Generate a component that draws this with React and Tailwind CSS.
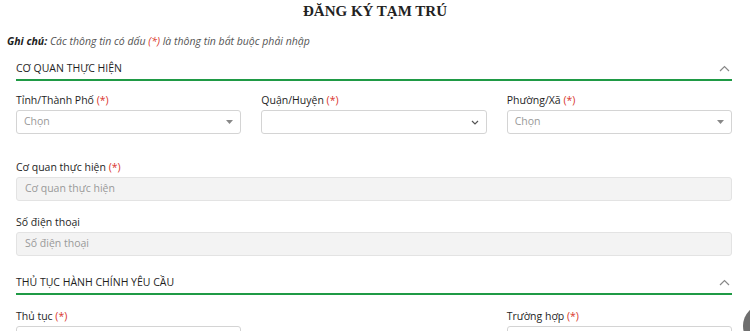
import React from "react";

const Req = () => <span className="text-[#d9342b]">(*)</span>;

function Caret() {
  return (
    <svg width="7" height="4" viewBox="0 0 7 4" className="shrink-0">
      <path d="M0 0 L7 0 L3.5 4 Z" fill="#888" />
    </svg>
  );
}

function ChevronDown() {
  return (
    <svg width="8" height="5" viewBox="0 0 8 5" className="shrink-0">
      <path d="M1 1 L4 4 L7 1" fill="none" stroke="#555" strokeWidth="1.2" />
    </svg>
  );
}

function ChevronUp() {
  return (
    <svg width="11" height="7" viewBox="0 0 11 7" className="shrink-0">
      <path d="M1 6 L5.5 1.5 L10 6" fill="none" stroke="#888" strokeWidth="1.2" />
    </svg>
  );
}

function Select({ placeholder, chevron }) {
  return (
    <div className="flex h-[24px] items-center justify-between rounded-[3px] border border-[#d4d4d4] bg-white pl-[7px] pr-[7px]">
      <span className="text-[10.5px] text-[#999]">{placeholder}</span>
      {chevron ? <ChevronDown /> : <Caret />}
    </div>
  );
}

function Field({ label, children }) {
  return (
    <div className="flex flex-col">
      <div className="mb-[3px] h-[14px] text-[10.5px] font-medium leading-[14px] text-[#1e1e1e]">{label}</div>
      {children}
    </div>
  );
}

function TextInput({ placeholder }) {
  return (
    <div className="flex h-[24px] items-center rounded-[3px] border border-[#e3e3e3] bg-[#f3f3f3] px-[8px]">
      <span className="text-[10.5px] text-[#999]">{placeholder}</span>
    </div>
  );
}

function SectionHeader({ title }) {
  return (
    <div className="flex items-center justify-between border-b-[2px] border-[#1f9a45] pb-[3px] pr-[2px]">
      <span className="text-[10.5px] font-medium leading-[15px] text-[#1e1e1e]">{title}</span>
      <ChevronUp />
    </div>
  );
}

export default function App() {
  return (
    <div
      className="relative h-[331px] w-[750px] overflow-hidden bg-white"
      style={{ fontFamily: '"Open Sans", "Noto Sans", sans-serif' }}
    >
      <h1
        className="pt-[1px] text-center text-[15px] font-bold leading-[20px] text-[#222]"
        style={{ fontFamily: '"Liberation Serif", "DejaVu Serif", serif' }}
      >
        ĐĂNG KÝ TẠM TRÚ
      </h1>
      <div className="mt-[13px] pl-[7px] text-[10.5px] italic leading-[15px] text-[#555]">
        <span className="font-bold text-[#222]">Ghi chú:</span> Các thông tin có dấu{" "}
        <span className="text-[#d9342b]">(*)</span> là thông tin bắt buộc phải nhập
      </div>

      <div className="ml-[16px] mr-[18px] mt-[12px]">
        <SectionHeader title="CƠ QUAN THỰC HIỆN" />

        <div className="mt-[12px] grid grid-cols-3 gap-x-[20px]">
          <Field label={<>Tỉnh/Thành Phố <Req /></>}>
            <Select placeholder="Chọn" />
          </Field>
          <Field label={<>Quận/Huyện <Req /></>}>
            <Select placeholder="" chevron />
          </Field>
          <Field label={<>Phường/Xã <Req /></>}>
            <Select placeholder="Chọn" />
          </Field>
        </div>

        <div className="mt-[26px]">
          <Field label={<>Cơ quan thực hiện <Req /></>}>
            <TextInput placeholder="Cơ quan thực hiện" />
          </Field>
        </div>

        <div className="mt-[14px]">
          <Field label="Số điện thoại">
            <TextInput placeholder="Số điện thoại" />
          </Field>
        </div>

        <div className="mt-[19px]">
          <SectionHeader title="THỦ TỤC HÀNH CHÍNH YÊU CẦU" />
        </div>

        <div className="mt-[14px] grid grid-cols-3 gap-x-[20px]">
          <Field label={<>Thủ tục <Req /></>}>
            <Select placeholder="" />
          </Field>
          <div />
          <Field label={<>Trường hợp <Req /></>}>
            <Select placeholder="" />
          </Field>
        </div>
      </div>

      <div className="absolute left-[743px] top-[304px] h-[44px] w-[44px] rounded-full bg-[#6f6f6f]" />
    </div>
  );
}
